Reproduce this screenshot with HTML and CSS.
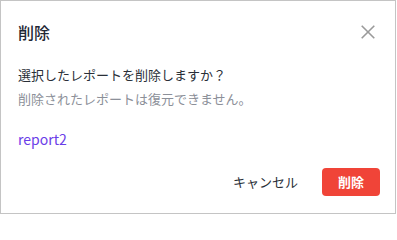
FILE: index.html
```html
<!DOCTYPE html>
<html lang="ja">
<head>
<meta charset="utf-8">
<link rel="stylesheet" href="styles.css">
</head>
<body>
<div class="dialog">
  <div class="header">
    <div class="title">削除</div>
    <button class="close" aria-label="close">
      <svg width="14" height="14" viewBox="0 0 14 14"><path d="M0.7 0.7L13.3 13.3M13.3 0.7L0.7 13.3" stroke="#9a9a9a" stroke-width="1.6" fill="none"/></svg>
    </button>
  </div>
  <div class="body">
    <p class="msg">選択したレポートを削除しますか？</p>
    <p class="sub">削除されたレポートは復元できません。</p>
    <p class="name">report2</p>
  </div>
  <div class="footer">
    <button class="btn cancel">キャンセル</button>
    <button class="btn danger">削除</button>
  </div>
</div>
</body>
</html>
```
FILE: styles.css
```css
html, body {
  margin: 0;
  padding: 0;
  background: #ffffff;
}
body {
  font-family: "Noto Sans CJK JP", "Noto Sans", sans-serif;
}
.dialog {
  box-sizing: border-box;
  width: 396px;
  height: 214px;
  border: 1px solid #c4c4c4;
  background: #fff;
  display: flex;
  flex-direction: column;
}
.header {
  display: flex;
  align-items: center;
  justify-content: space-between;
  padding: 19px 20px 0 17px;
  height: 24px;
}
.title {
  font-size: 16px;
  line-height: 24px;
  color: #1f2733;
  font-weight: 500;
}
.close {
  border: 0;
  background: none;
  padding: 0;
  width: 14px;
  height: 14px;
  display: flex;
}
.body {
  padding: 19px 17px 0 17px;
}
.body p {
  margin: 0;
}
.msg {
  font-size: 13px;
  line-height: 24px;
  color: #2a2f38;
}
.sub {
  font-size: 13px;
  line-height: 24px;
  color: #8c9099;
}
.name {
  margin-top: 18px !important;
  font-size: 14px;
  line-height: 20px;
  color: #6a3de8;
  font-weight: 400;
}
.footer {
  margin-top: auto;
  display: flex;
  justify-content: flex-end;
  gap: 8px;
  padding: 0 15px 17px 0;
}
.btn {
  font-family: inherit;
  font-size: 13px;
  height: 28px;
  padding: 0 16px;
  border: 0;
  border-radius: 4px;
  line-height: 28px;
}
.cancel {
  background: transparent;
  color: #2a2f38;
  font-weight: 400;
}
.danger {
  background: #f04438;
  color: #fff;
  font-weight: 700;
}
```
